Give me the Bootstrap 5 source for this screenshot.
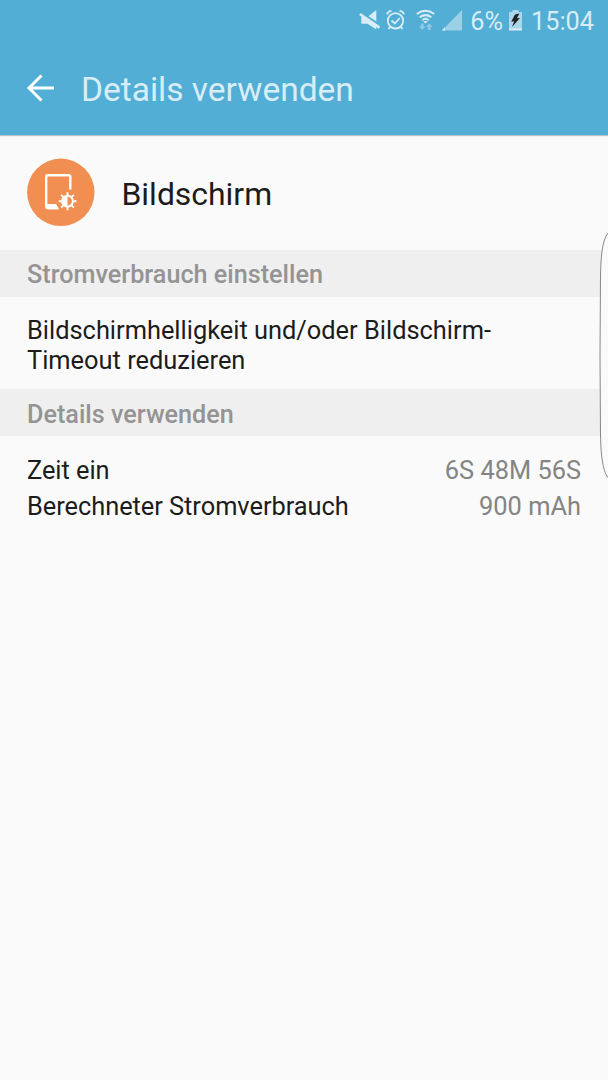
<!DOCTYPE html>
<html lang="de">
<head>
<meta charset="utf-8">
<meta name="viewport" content="width=device-width, initial-scale=1">
<title>Details verwenden</title>
<link rel="stylesheet" href="https://cdn.jsdelivr.net/npm/bootstrap@5.3.0/dist/css/bootstrap.min.css">
<style>
  body { font-family: Roboto, "Liberation Sans", sans-serif; font-size: 25.4px; line-height: 30px; background: #fafafa; color: #1c1c1c; }
  .screen { height: 1080px; }
  .top-area { height: 135px; background: #52aed5; box-shadow: 0 1px 1px #b9c3c7; }
  .status { height: 42px; padding-right: 14px; color: #d8edf6; font-size: 25.3px; }
  .percent, .clock { padding-top: 2px; }
  .battery { margin: 0 8px 0 5px; }
  .title-bar { height: 93px; padding-left: 26px; padding-bottom: 2px; }
  .title-bar h1 { font-size: 33.5px; line-height: 40px; font-weight: 400; color: #d8edf6; margin-left: 25px; padding-top: 5px; }
  .app-row { height: 115px; padding-left: 27px; gap: 26.5px; }
  .app-row h2 { font-size: 31.9px; line-height: 38px; font-weight: 400; padding-top: 3px; }
  .section-head { height: 47px; padding: 3px 27px 0; background: #efefef; color: #949494; font-size: 25.2px; line-height: 30px; font-weight: 500; }
  .hint { height: 92px; padding: 18px 27px 0; }
  .hint + .section-head { padding-top: 5px; }
  .facts { padding: 16px 27px 0; line-height: 36px; }
  .facts dt { letter-spacing: -.04px; }
  .facts dd { color: #848484; }
  .edge-panel { right: 0; top: 230px; }
</style>
</head>
<body>
<div class="screen position-relative overflow-hidden">
  <header class="top-area">
    <div class="status d-flex justify-content-end align-items-center">
      <svg width="112" height="42" viewBox="0 0 112 42" fill="#d8edf6">
        <path d="M11.3 17 H17.5 L26.3 10 V29.6 L17.5 23.8 H11.3Z"/>
        <path d="M10.5 11.9 L30.5 25.6" stroke="#52aed5" stroke-width="2"/>
        <path d="M9.8 14 L29.5 27.7" stroke="#d8edf6" stroke-width="2.7"/>
        <g fill="none" stroke="#d8edf6" stroke-width="1.8">
          <circle cx="45.5" cy="20.8" r="7.7"/><path d="M41.5 20.5 L44.8 23.5 L49.8 18 M37 14.2 Q38 11 41.5 10.8 M49.5 10.8 Q53 11 54 14.2 M40.5 26.5 L38.5 29 M50.5 26.5 L52.5 29"/>
          <path d="M66.8 14 Q75.5 7.5 84.2 14 M69.7 17.3 Q75.5 12.9 81.3 17.3 M72.4 20 Q75.5 17.5 78.6 20" stroke-width="2"/>
        </g>
        <path d="M73.2 21 H77.8 L75.5 23.4Z"/>
        <path d="M71 23.5 h2.5 v3 h2 L72.3 30 69 26.5 h2z M78 30 h2.5 v-3 h2 L79.3 23.5 76 27 h2z" fill="#8fcae4"/>
        <path d="M92 30.5 L112 10 V30.5Z" fill="#9bd0e7"/><path d="M92 30.5 L95 27 V30.5Z"/>
      </svg>
      <span class="ms-2 percent">6%</span>
      <svg class="battery" width="15" height="22" viewBox="0 0 15 22"><path d="M1 2 H4.5 V0 H10.5 V2 H14 V20 H1Z" fill="#a9d7eb"/><path d="M1 18.5 H14 V20.5 H1Z" fill="#d8edf6"/><path d="M7 4.5 L11.5 3.5 L8.8 8.3 L12 8 L4 17 L6.2 11.2 L3.2 11.7Z" fill="#202020"/></svg>
      <time class="clock">15:04</time>
    </div>
    <div class="title-bar d-flex align-items-center">
      <svg width="30" height="30" viewBox="0 0 30 30" fill="none" stroke="#fff" stroke-width="2.9"><path d="M28 15 H3 M15.5 2.5 L3 15 L15.5 27.5"/></svg>
      <h1 class="mb-0">Details verwenden</h1>
    </div>
  </header>
  <main>
    <div class="app-row d-flex align-items-center">
      <svg width="68" height="69" viewBox="0 0 68 69">
        <circle cx="33.8" cy="34.3" r="33.7" fill="#f08f51"/>
        <path d="M43.3 31.5 V19 Q43.3 17.2 41.5 17.2 H21 Q19.2 17.2 19.2 19 V48 Q19.2 50 21 50 H31" fill="none" stroke="#fff" stroke-width="2.4"/>
        <path d="M19 46 H29 L32 51.2 H20.5 Q19 51 19 49Z" fill="#fff"/>
        <g stroke="#fff" stroke-width="1.9"><path d="M40.5 34.3v3M40.5 49.2v3M31.7 43.2h3M46.4 43.2h3M34.2 36.9l2.2 2.2M44.6 47.3l2.2 2.2M46.8 36.9l-2.2 2.2M36.4 47.3l-2.2 2.2"/><circle cx="40.5" cy="43.2" r="5.4" fill="none"/></g>
        <path d="M40.5 38 A5.2 5.2 0 0 0 40.5 48.4Z" fill="#fff"/>
      </svg>
      <h2 class="mb-0">Bildschirm</h2>
    </div>
    <h3 class="section-head d-flex align-items-center mb-0">Stromverbrauch einstellen</h3>
    <p class="hint mb-0">Bildschirmhelligkeit und/oder Bildschirm-<br>Timeout reduzieren</p>
    <h3 class="section-head d-flex align-items-center mb-0">Details verwenden</h3>
    <dl class="facts mb-0">
      <div class="d-flex justify-content-between"><dt class="fw-normal">Zeit ein</dt><dd class="mb-0">6S 48M 56S</dd></div>
      <div class="d-flex justify-content-between"><dt class="fw-normal">Berechneter Stromverbrauch</dt><dd class="mb-0">900 mAh</dd></div>
    </dl>
  </main>
  <svg class="edge-panel position-absolute" width="9" height="252" viewBox="0 0 9 252"><path d="M10 2 C4 8 2 22 1.5 45 L1 126 L1.5 205 C2 228 4 242 10 249Z" fill="#fafafa" stroke="#888" stroke-width="1"/></svg>
</div>
<script src="https://cdn.jsdelivr.net/npm/bootstrap@5.3.0/dist/js/bootstrap.bundle.min.js"></script>
</body>
</html>
